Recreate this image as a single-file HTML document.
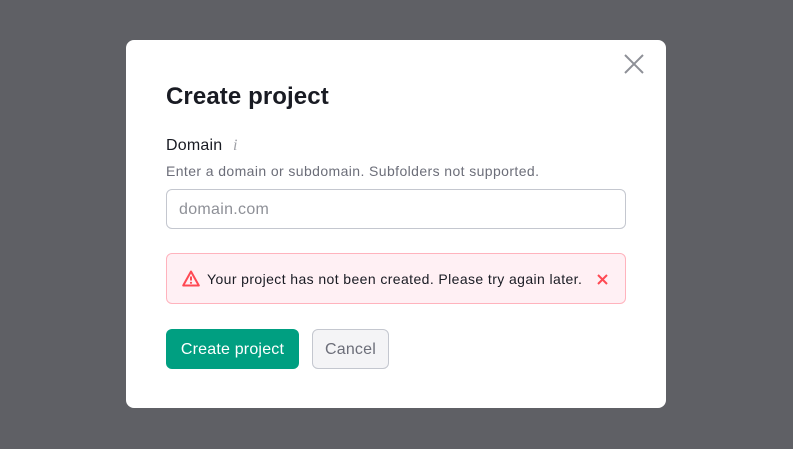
<!DOCTYPE html>
<html><head><style>
body{margin:0;width:793px;height:449px;background:#5f6065;font-family:"Liberation Sans",sans-serif;position:relative;overflow:hidden}
.m{position:absolute;left:126px;top:40px;width:540px;height:368px;background:#fff;border-radius:8px}
.a{position:absolute;white-space:nowrap}
</style></head><body>
<div class="m">
<svg class="a" style="left:498px;top:14px" width="20" height="20" viewBox="0 0 20 20"><path d="M1 1L19 19M19 1L1 19" stroke="#8e9097" stroke-width="2"/></svg>
<div class="a" style="left:40px;top:43px;font-size:24px;font-weight:bold;color:#191b23;letter-spacing:0.1px">Create project</div>
<div class="a" style="left:40px;top:97px;font-size:16px;color:#191b23;letter-spacing:0.2px">Domain <span style="color:#a0a2a8;font-family:'Liberation Serif',serif;font-style:italic;margin-left:6px">i</span></div>
<div class="a" style="left:40px;top:123px;font-size:14px;color:#6c6e79;letter-spacing:0.4px">Enter a domain or subdomain. Subfolders not supported.</div>
<div class="a" style="left:40px;top:149px;width:458px;height:38px;border:1px solid #c4c7cf;border-radius:6px;box-sizing:content-box"><div style="padding:11px 12px;font-size:16px;color:#8e9097;letter-spacing:0.3px">domain.com</div></div>
<div class="a" style="left:40px;top:213px;width:458px;height:49px;border:1px solid #ffb3bd;border-radius:6px;background:#fff0f4">
<svg class="a" style="left:15px;top:16px" width="18" height="17" viewBox="0 0 18 17"><path d="M9 1.5L16.8 15.5H1.2Z" fill="none" stroke="#ff4953" stroke-width="2" stroke-linejoin="round"/><path d="M9 6.5V10.5" stroke="#ff4953" stroke-width="2"/><circle cx="9" cy="12.8" r="1.1" fill="#ff4953"/></svg>
<div class="a" style="left:40px;top:17px;font-size:14px;color:#191b23;letter-spacing:0.4px">Your project has not been created. Please try again later.</div>
<svg class="a" style="left:430px;top:20px" width="11" height="11" viewBox="0 0 11 11"><path d="M1 1L10 10M10 1L1 10" stroke="#ff4953" stroke-width="2"/></svg>
</div>
<div class="a" style="left:40px;top:289px;width:133px;height:40px;background:#009f81;border-radius:6px;color:#fff;font-size:16px;line-height:42px;text-align:center;letter-spacing:0.2px">Create project</div>
<div class="a" style="left:186px;top:289px;width:75px;height:38px;background:#f4f4f6;border:1px solid #c4c7cf;border-radius:6px;color:#6c6e79;font-size:16px;line-height:40px;text-align:center;letter-spacing:0.2px">Cancel</div>
</div>
</body></html>
